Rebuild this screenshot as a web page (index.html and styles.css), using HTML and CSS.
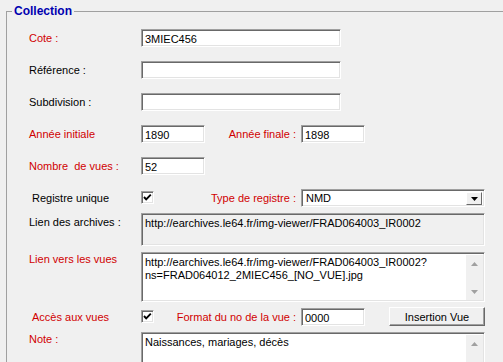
FILE: index.html
```html
<!DOCTYPE html>
<html lang="fr">
<head>
  <meta charset="UTF-8">
  <title>Collection</title>
  <link rel="stylesheet" href="styles.css">
</head>
<body>
  <fieldset class="group">
    <legend>Collection</legend>

    <div class="row first">
      <label class="lbl red">Cote :</label>
      <input class="field w200" type="text" value="3MIEC456">
    </div>

    <div class="row">
      <label class="lbl">Référence :</label>
      <input class="field w200" type="text">
    </div>

    <div class="row">
      <label class="lbl">Subdivision :</label>
      <input class="field w200" type="text">
    </div>

    <div class="row">
      <label class="lbl red">Année initiale</label>
      <input class="field w64" type="text" value="1890">
      <label class="lbl2 red">Année finale :</label>
      <input class="field w64" type="text" value="1898">
    </div>

    <div class="row">
      <label class="lbl red">Nombre&nbsp; de vues :</label>
      <input class="field w64" type="text" value="52">
    </div>

    <div class="row">
      <label class="lbl indent">Registre unique</label>
      <span class="check">
        <svg width="9" height="9" viewBox="0 0 9 9"><polyline points="1,4 3.2,6.4 7.8,1.6" fill="none" stroke="#000" stroke-width="1.9"/></svg>
      </span>
      <label class="lbl2 wide red">Type de registre :</label>
      <div class="combo">
        <span class="combo-text">NMD</span>
        <span class="combo-btn"><svg width="7" height="4" viewBox="0 0 7 4"><polygon points="0,0 7,0 3.5,4" fill="#000"/></svg></span>
      </div>
    </div>

    <div class="row tight">
      <label class="lbl">Lien des archives :</label>
      <div class="memo readonly h33">
        <div class="memo-text">http://earchives.le64.fr/img-viewer/FRAD064003_IR0002</div>
      </div>
    </div>

    <div class="row tight">
      <label class="lbl red up">Lien vers les vues</label>
      <div class="memo h50">
        <div class="memo-text">http://earchives.le64.fr/img-viewer/FRAD064003_IR0002?<br>ns=FRAD064012_2MIEC456_[NO_VUE].jpg</div>
        <div class="scroll">
          <svg width="7" height="4" viewBox="0 0 7 4"><polygon points="3.5,0 7,4 0,4" fill="#a0a0a0"/></svg>
          <svg width="7" height="4" viewBox="0 0 7 4"><polygon points="0,0 7,0 3.5,4" fill="#a0a0a0"/></svg>
        </div>
      </div>
    </div>

    <div class="row tight">
      <label class="lbl red indent">Accès aux vues</label>
      <span class="check">
        <svg width="9" height="9" viewBox="0 0 9 9"><polyline points="1,4 3.2,6.4 7.8,1.6" fill="none" stroke="#000" stroke-width="1.9"/></svg>
      </span>
      <label class="lbl2 wide red">Format du no de la vue :</label>
      <input class="field w64" type="text" value="0000">
      <button class="btn" type="button">Insertion Vue</button>
    </div>

    <div class="row tight">
      <label class="lbl red up">Note :</label>
      <div class="memo h60">
        <div class="memo-text">Naissances, mariages, décès</div>
        <div class="scroll">
          <svg width="7" height="4" viewBox="0 0 7 4"><polygon points="3.5,0 7,4 0,4" fill="#a0a0a0"/></svg>
        </div>
      </div>
    </div>
  </fieldset>
</body>
</html>
```

FILE: styles.css
```css
html, body {
  margin: 0;
  height: 100%;
  overflow: hidden;
  background: #f0f0f0;
}
body {
  font-family: "Liberation Sans", Arial, sans-serif;
  font-size: 11px;
  color: #000;
}

.group {
  margin: 4px 0 0 6px;
  padding: 0 0 0 22px;
  width: 520px;
  border: 1px solid #a0a0a0;
  border-right: none;
  border-bottom: none;
}
.group legend {
  margin-left: -17px;
  padding: 0 2px;
  font-size: 12px;
  font-weight: bold;
  color: #0000b0;
  line-height: 14px;
}

.row {
  display: flex;
  align-items: flex-start;
  margin-top: 14px;
}
.row.first {
  margin-top: 11px;
}
.row.tight {
  margin-top: 6px;
}

.lbl {
  width: 112px;
  flex: none;
  line-height: 18px;
}
.lbl.indent {
  padding-left: 3px;
  width: 109px;
}
.lbl.up {
  margin-top: -2px;
}
.lbl2 {
  width: 96px;
  flex: none;
  box-sizing: border-box;
  padding-right: 5px;
  text-align: right;
  line-height: 18px;
  white-space: nowrap;
}
.lbl2.wide {
  width: 147px;
}
.red {
  color: #d00000;
}

.field {
  box-sizing: border-box;
  height: 18px;
  margin: 0;
  padding: 1px 3px 0;
  border-top: 1px solid #a0a0a0;
  border-left: 1px solid #a0a0a0;
  border-right: 1px solid #fff;
  border-bottom: 1px solid #fff;
  box-shadow: inset 1px 1px #696969, inset -1px -1px #e3e3e3;
  background: #fff;
  font-family: inherit;
  font-size: 11px;
  color: #000;
  outline: none;
}
.w200 {
  width: 200px;
}
.w64 {
  width: 64px;
}

.check {
  box-sizing: border-box;
  width: 13px;
  height: 13px;
  margin-top: 2px;
  flex: none;
  display: flex;
  align-items: center;
  justify-content: center;
  border-top: 1px solid #a0a0a0;
  border-left: 1px solid #a0a0a0;
  border-right: 1px solid #fff;
  border-bottom: 1px solid #fff;
  box-shadow: inset 1px 1px #696969, inset -1px -1px #e3e3e3;
  background: #fff;
}

.combo {
  box-sizing: border-box;
  width: 184px;
  height: 18px;
  display: flex;
  align-items: stretch;
  border-top: 1px solid #a0a0a0;
  border-left: 1px solid #a0a0a0;
  border-right: 1px solid #fff;
  border-bottom: 1px solid #fff;
  box-shadow: inset 1px 1px #696969, inset -1px -1px #e3e3e3;
  background: #fff;
  padding: 2px 2px 1px 2px;
}
.combo-text {
  flex: 1;
  padding-left: 2px;
  line-height: 13px;
}
.combo-btn {
  width: 16px;
  display: flex;
  align-items: center;
  justify-content: center;
  background: #f0f0f0;
  border-top: 1px solid #fff;
  border-left: 1px solid #fff;
  border-right: 1px solid #696969;
  border-bottom: 1px solid #696969;
  box-sizing: border-box;
}

.memo {
  box-sizing: border-box;
  width: 344px;
  display: flex;
  border-top: 1px solid #a0a0a0;
  border-left: 1px solid #a0a0a0;
  border-right: 1px solid #fff;
  border-bottom: 1px solid #fff;
  box-shadow: inset 1px 1px #696969, inset -1px -1px #e3e3e3;
  background: #fff;
  padding: 2px 1px 1px 2px;
}
.memo.readonly {
  background: #f0f0f0;
}
.h33 {
  height: 33px;
}
.h50 {
  height: 50px;
}
.h60 {
  height: 60px;
}
.memo-text {
  flex: 1;
  padding: 1px 0 0 1px;
  line-height: 13px;
  white-space: nowrap;
  overflow: hidden;
}
.scroll {
  width: 17px;
  flex: none;
  display: flex;
  flex-direction: column;
  justify-content: space-between;
  align-items: center;
  padding: 7px 0 6px;
  box-sizing: border-box;
  background: #f0f0f0;
}

.btn {
  box-sizing: border-box;
  width: 96px;
  height: 19px;
  margin: -1px 0 0 24px;
  padding: 0;
  background: #f0f0f0;
  border-top: 1px solid #fff;
  border-left: 1px solid #fff;
  border-right: 1px solid #696969;
  border-bottom: 1px solid #696969;
  box-shadow: inset -1px -1px #a0a0a0;
  font-family: inherit;
  font-size: 11px;
  color: #000;
}
```
